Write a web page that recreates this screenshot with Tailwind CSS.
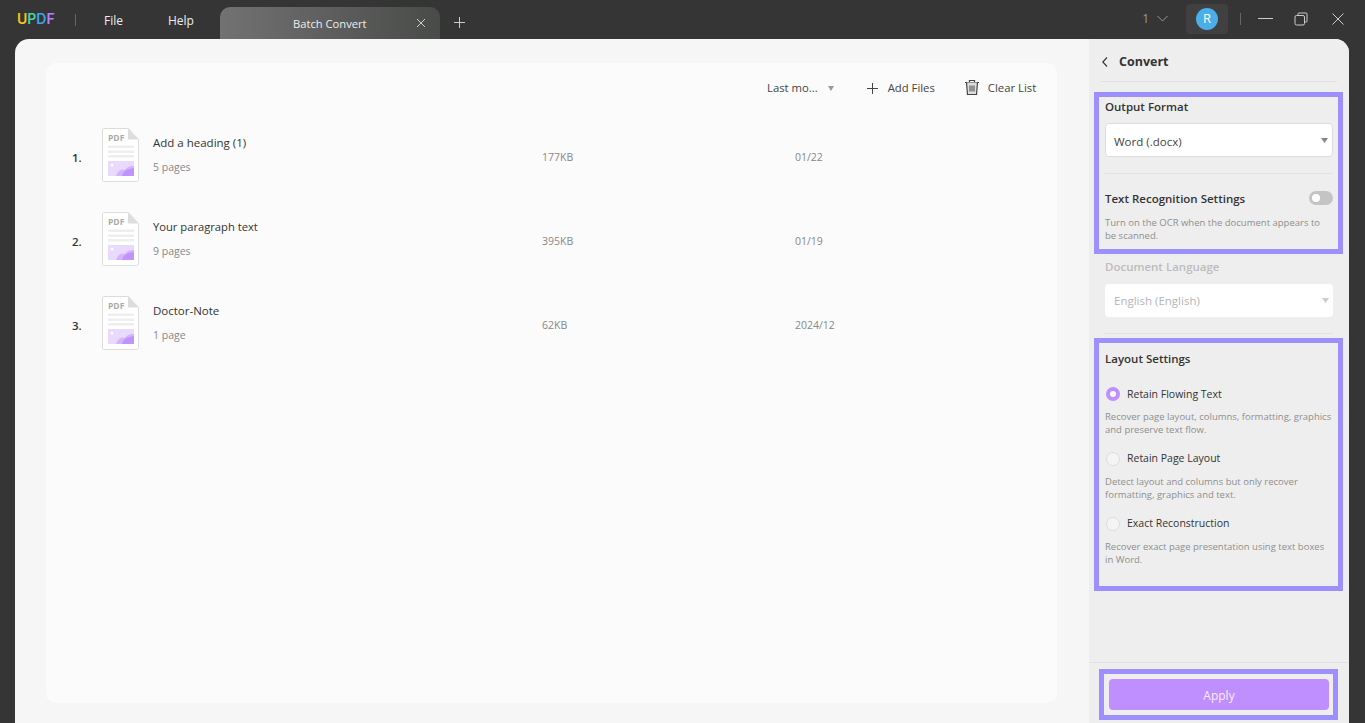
<!DOCTYPE html>
<html lang="en">
<head>
    <meta charset="UTF-8">
    <title>UPDF - Batch Convert</title>
    <script src="https://cdn.jsdelivr.net/npm/@tailwindcss/browser@4"></script>
</head>
<body class="w-[1365px] h-[723px] overflow-hidden bg-[#353535] font-['Open_Sans',sans-serif] text-[#333]">

    <!-- Title bar -->
    <div class="h-[39px] flex items-start relative text-white">
        <div class="w-[75px] pl-[17px] pt-[9px] text-[14px] leading-[20px] font-semibold font-['Inter',sans-serif] flex">
            <span class="text-[#f5c518]">U</span><span class="text-[#3fd6a5]">P</span><span class="text-[#40a2ee]">D</span><span class="text-[#b583fb]">F</span>
        </div>
        <div class="w-px h-[12px] mt-[14px] bg-[#666]"></div>
        <div class="ml-[28px] mt-[12px] text-[12px] leading-[18px] text-[#eee]">File</div>
        <div class="ml-[45px] mt-[12px] text-[12px] leading-[18px] text-[#eee]">Help</div>
        <!-- Tab -->
        <div class="ml-[26px] mt-[7px] w-[220px] h-[32px] rounded-t-[10px] bg-gradient-to-r from-[#727272] to-[#494b49] flex items-center relative">
            <span class="ml-[73px] text-[11.2px] leading-[18px] pt-px text-[#eee]">Batch Convert</span>
            <svg class="absolute left-[196px] top-[11px]" width="10" height="10" viewBox="0 0 10 10" fill="none" stroke="#ccc" stroke-width="1"><path d="M1 1l8 8M9 1l-8 8"/></svg>
        </div>
        <svg class="ml-[13px] mt-[16px]" width="13" height="13" viewBox="0 0 13 13" fill="none" stroke="#ccc" stroke-width="1"><path d="M6.5 1v11M1 6.5h11"/></svg>
        <!-- Right side controls -->
        <div class="ml-auto flex items-start">
            <span class="mt-[10px] text-[12px] leading-[18px] text-[#999]">1</span>
            <svg class="ml-[8px] mt-[15px]" width="11" height="7" viewBox="0 0 11 7" fill="none" stroke="#999" stroke-width="1"><path d="M.5 1l5 5 5-5"/></svg>
            <div class="ml-[18px] mt-[4px] w-[42px] h-[30px] rounded-[4px] bg-[#404040] flex items-center justify-center">
                <div class="w-[22px] h-[22px] rounded-full bg-[#4baee8] text-white text-[13px] flex items-center justify-center">R</div>
            </div>
            <div class="ml-[12px] mt-[13px] w-px h-[12px] bg-[#666]"></div>
            <svg class="ml-[17px] mt-[18px]" width="15" height="1" viewBox="0 0 15 1"><path d="M0 .5h15" stroke="#ccc"/></svg>
            <svg class="ml-[21px] mt-[12px]" width="15" height="14" viewBox="0 0 15 14" fill="none" stroke="#ccc" stroke-width="1"><rect x="1" y="3.5" width="9.500" height="9.500" rx="1.500"/><path d="M4 3.500V2a1 1 0 0 1 1-1h7a1 1 0 0 1 1 1v7a1 1 0 0 1-1 1h-1.500"/></svg>
            <svg class="ml-[23px] mr-[21px] mt-[13px]" width="12" height="12" viewBox="0 0 12 12" fill="none" stroke="#ccc" stroke-width="1"><path d="M.5.5l11 11M11.5.5l-11 11"/></svg>
        </div>
    </div>

    <!-- Main window -->
    <div class="ml-[15px] w-[1334px] h-[684px] rounded-t-[14px] overflow-hidden flex bg-[#f6f6f6]">

        <!-- File list -->
        <div class="w-[1074px] pl-[31px] pt-[24px]">
            <div class="w-[1011px] h-[640px] rounded-[10px] bg-[#fbfbfb] relative">
                <!-- Toolbar -->
                <div class="h-[50px] flex items-center text-[11.3px] text-[#444]">
                    <span class="ml-[721px]">Last mo...</span>
                    <svg class="ml-[10px]" width="6" height="5" viewBox="0 0 6 5"><path d="M0 0h6L3 5z" fill="#999"/></svg>
                    <svg class="ml-[33px]" width="11" height="11" viewBox="0 0 11 11" fill="none" stroke="#444"><path d="M5.5 0v11M0 5.5h11"/></svg>
                    <span class="ml-[10px]">Add Files</span>
                    <svg class="ml-[29px] -mt-[2px]" width="16" height="17" viewBox="0 0 16 17" fill="none" stroke="#444" stroke-width="1.2"><path d="M1 3.5h14M5.5 3.5V1.5h5v2"/><path d="M2.5 3.5l1 12h9l1-12" fill="#ddd"/><path d="M6 6.5v6M8 6.500v6M10 6.500v6" stroke-width="1"/></svg>
                    <span class="ml-[8px]">Clear List</span>
                </div>

                <!-- Rows -->
                <div class="pl-[26px]">
                    <div class="h-[84px] flex items-center">
                        <span class="w-[30px] mt-[6px] text-[11.5px] font-semibold text-[#333]">1.</span>
                        <svg class="w-[37px] h-[54px] shrink-0" width="37" height="54" viewBox="0 0 37 54"><path d="M1.500.5h25l10 11v40a2 2 0 0 1-2 2h-33a1 1 0 0 1-1-1V1.500z" fill="#fff" stroke="#ddd"/><path d="M26 .5l10.500 11H26z" fill="#ddd"/><text x="6" y="12.500" font-size="8.500" font-weight="700" fill="#aaa">PDF</text><path d="M6 17.500h26v2.500H6zM6 22.500h26v2.500H6zM6 27h26v2.500H6z" fill="#eee"/><path d="M6 33h26v15H6z" fill="#e9d9fd"/><path d="M14 48q3-8 9-6 2-4 9-4v10z" fill="#d3b5fb"/><path d="M20 48q1-7 12-8v8z" fill="#bf94fc"/><circle cx="10" cy="37" r="1.500" fill="#fff"/></svg>
                        <div class="ml-[14px] w-[389px]">
                            <div class="text-[11.5px] leading-[18px] font-medium text-[#333]">Add a heading (1)</div>
                            <div class="mt-[6px] text-[10.5px] leading-[18px] text-[#888]">5 pages</div>
                        </div>
                        <span class="w-[253px] mt-[6px] text-[10.5px] text-[#888]">177KB</span>
                        <span class="mt-[6px] text-[10.5px] text-[#888]">01/22</span>
                    </div>
                    <div class="h-[84px] flex items-center">
                        <span class="w-[30px] mt-[6px] text-[11.5px] font-semibold text-[#333]">2.</span>
                        <svg class="w-[37px] h-[54px] shrink-0" width="37" height="54" viewBox="0 0 37 54"><path d="M1.500.5h25l10 11v40a2 2 0 0 1-2 2h-33a1 1 0 0 1-1-1V1.500z" fill="#fff" stroke="#ddd"/><path d="M26 .5l10.500 11H26z" fill="#ddd"/><text x="6" y="12.500" font-size="8.500" font-weight="700" fill="#aaa">PDF</text><path d="M6 17.500h26v2.500H6zM6 22.500h26v2.500H6zM6 27h26v2.500H6z" fill="#eee"/><path d="M6 33h26v15H6z" fill="#e9d9fd"/><path d="M14 48q3-8 9-6 2-4 9-4v10z" fill="#d3b5fb"/><path d="M20 48q1-7 12-8v8z" fill="#bf94fc"/><circle cx="10" cy="37" r="1.500" fill="#fff"/></svg>
                        <div class="ml-[14px] w-[389px]">
                            <div class="text-[11.2px] leading-[18px] font-medium text-[#333]">Your paragraph text</div>
                            <div class="mt-[6px] text-[10.5px] leading-[18px] text-[#888]">9 pages</div>
                        </div>
                        <span class="w-[253px] mt-[6px] text-[10.5px] text-[#888]">395KB</span>
                        <span class="mt-[6px] text-[10.5px] text-[#888]">01/19</span>
                    </div>
                    <div class="h-[84px] flex items-center">
                        <span class="w-[30px] mt-[6px] text-[11.5px] font-semibold text-[#333]">3.</span>
                        <svg class="w-[37px] h-[54px] shrink-0" width="37" height="54" viewBox="0 0 37 54"><path d="M1.500.5h25l10 11v40a2 2 0 0 1-2 2h-33a1 1 0 0 1-1-1V1.500z" fill="#fff" stroke="#ddd"/><path d="M26 .5l10.500 11H26z" fill="#ddd"/><text x="6" y="12.500" font-size="8.500" font-weight="700" fill="#aaa">PDF</text><path d="M6 17.500h26v2.500H6zM6 22.500h26v2.500H6zM6 27h26v2.500H6z" fill="#eee"/><path d="M6 33h26v15H6z" fill="#e9d9fd"/><path d="M14 48q3-8 9-6 2-4 9-4v10z" fill="#d3b5fb"/><path d="M20 48q1-7 12-8v8z" fill="#bf94fc"/><circle cx="10" cy="37" r="1.500" fill="#fff"/></svg>
                        <div class="ml-[14px] w-[389px]">
                            <div class="text-[11.5px] leading-[18px] font-medium text-[#333]">Doctor-Note</div>
                            <div class="mt-[6px] text-[10.5px] leading-[18px] text-[#888]">1 page</div>
                        </div>
                        <span class="w-[253px] mt-[6px] text-[10.5px] text-[#888]">62KB</span>
                        <span class="mt-[6px] text-[10.5px] text-[#888]">2024/12</span>
                    </div>
                </div>
            </div>
        </div>

        <!-- Convert sidebar -->
        <div class="w-[260px] h-full bg-[#eeeeee] flex flex-col">
            <div class="mx-[12px] h-[43px] pt-[4px] border-b border-[#e2e2e2] flex items-center">
                <svg class="ml-[1px]" width="6" height="10" viewBox="0 0 6 10" fill="none" stroke="#333" stroke-width="1.100"><path d="M5 .5L.8 5 5 9.500"/></svg>
                <span class="ml-[11px] text-[12.500px] font-bold text-[#333]">Convert</span>
            </div>

            <!-- Output format + OCR (highlighted) -->
            <div class="ml-[5px] mt-[10px] w-[249px] h-[162px] border-[5px] border-[#9e8fff] px-[6px]">
                <div class="text-[11.5px] leading-[18px] pt-px font-semibold text-[#333]">Output Format</div>
                <div class="mt-[7px] h-[34px] w-[228px] rounded-[4px] bg-white border border-[#ddd] flex items-center justify-between pl-[8px] pr-[4px]">
                    <span class="pt-[3px] text-[11.5px] text-[#444]">Word (.docx)</span>
                    <svg width="7" height="5" viewBox="0 0 7 5"><path d="M0 0h7L3.500 5z" fill="#888"/></svg>
                </div>
                <div class="mt-[16px] w-[228px] border-t border-[#e2e2e2]"></div>
                <div class="mt-[16px] w-[228px] flex items-center justify-between">
                    <span class="text-[11.5px] leading-[18px] font-semibold text-[#333]">Text Recognition Settings</span>
                    <div class="-mt-[2px] w-[24px] h-[14px] rounded-full bg-[#c4c4c4] flex items-center pl-[3px]"><div class="w-[8px] h-[8px] rounded-full bg-white"></div></div>
                </div>
                <div class="mt-[8px] w-[228px] text-[9.500px] leading-[13px] text-[#8f8f8f]">Turn on the OCR when the document appears to be scanned.</div>
            </div>

            <!-- Document language (disabled) -->
            <div class="px-[16px]">
                <div class="mt-[4px] text-[11.5px] leading-[18px] font-semibold text-[#bcbcbc]">Document Language</div>
                <div class="mt-[8px] h-[33px] rounded-[4px] bg-white flex items-center justify-between pl-[9px] pr-[4px]">
                    <span class="text-[11.5px] text-[#b5b5b5]">English (English)</span>
                    <svg width="7" height="5" viewBox="0 0 7 5"><path d="M0 0h7L3.500 5z" fill="#ccc"/></svg>
                </div>
                <div class="mt-[16px] border-t border-[#e2e2e2]"></div>
            </div>

            <!-- Layout settings (highlighted) -->
            <div class="ml-[5px] mt-[4px] w-[249px] h-[253px] border-[5px] border-[#9e8fff] px-[6px]">
                <div class="mt-[7px] text-[11.5px] leading-[18px] font-semibold text-[#333]">Layout Settings</div>
                <div class="mt-[17px] flex items-center h-[18px]">
                    <div class="ml-[1px] w-[14px] h-[14px] rounded-full bg-[#c08fff] flex items-center justify-center"><div class="w-[6px] h-[6px] rounded-full bg-white"></div></div>
                    <span class="ml-[7px] pt-px text-[10.5px] text-[#333]">Retain Flowing Text</span>
                </div>
                <div class="mt-[7px] w-[230px] text-[9.500px] leading-[13px] text-[#8f8f8f]">Recover page layout, columns, formatting, graphics and preserve text flow.</div>
                <div class="mt-[14px] flex items-center h-[18px]">
                    <div class="ml-[1px] w-[14px] h-[14px] rounded-full bg-[#f4f4f4] border border-[#ddd]"></div>
                    <span class="ml-[7px] text-[10.5px] text-[#333]">Retain Page Layout</span>
                </div>
                <div class="mt-[7px] w-[228px] text-[9.500px] leading-[13px] text-[#8f8f8f]">Detect layout and columns but only recover formatting, graphics and text.</div>
                <div class="mt-[14px] flex items-center h-[18px]">
                    <div class="ml-[1px] w-[14px] h-[14px] rounded-full bg-[#f4f4f4] border border-[#ddd]"></div>
                    <span class="ml-[7px] text-[10.5px] text-[#333]">Exact Reconstruction</span>
                </div>
                <div class="mt-[7px] w-[228px] text-[9.500px] leading-[13px] text-[#8f8f8f]">Recover exact page presentation using text boxes in Word.</div>
            </div>

            <!-- Footer -->
            <div class="mt-[71px] border-t border-[#e2e2e2]">
                <div class="ml-[10px] mt-[6px] w-[239px] h-[51px] border-[5px] border-[#9e8fff] py-[5px] pl-[5px] pr-[4px]">
                    <button class="w-full h-[31px] pt-[2px] rounded-[4px] bg-[#c08fff] text-[12px] text-[#f5ecff]">Apply</button>
                </div>
            </div>
        </div>
    </div>
</body>
</html>
